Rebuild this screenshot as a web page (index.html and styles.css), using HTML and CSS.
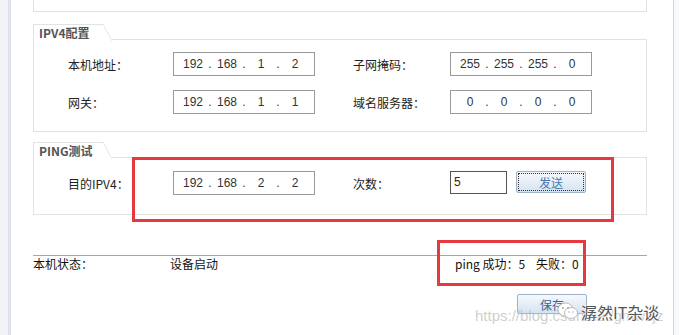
FILE: index.html
```html
<!DOCTYPE html>
<html lang="zh-CN">
<head>
    <meta charset="UTF-8">
    <title>IPV4配置</title>
    <link rel="stylesheet" href="styles.css">
</head>
<body>
<div class="window">
    <div class="side"></div>
    <div class="main">
        <div class="top-box"></div>

        <div class="group ipv4">
            <div class="group-head"><div class="tab">IPV4配置</div><div class="head-line"></div></div>
            <div class="group-body">
                <div class="row">
                    <span class="label">本机地址：</span>
                    <div class="ip"><span>192</span><i>.</i><span>168</span><i>.</i><span>1</span><i>.</i><span>2</span></div>
                    <span class="label">子网掩码：</span>
                    <div class="ip"><span>255</span><i>.</i><span>255</span><i>.</i><span>255</span><i>.</i><span>0</span></div>
                </div>
                <div class="row">
                    <span class="label">网关：</span>
                    <div class="ip"><span>192</span><i>.</i><span>168</span><i>.</i><span>1</span><i>.</i><span>1</span></div>
                    <span class="label">域名服务器：</span>
                    <div class="ip"><span>0</span><i>.</i><span>0</span><i>.</i><span>0</span><i>.</i><span>0</span></div>
                </div>
            </div>
        </div>

        <div class="group ping">
            <div class="group-head"><div class="tab">PING测试</div><div class="head-line"></div></div>
            <div class="group-body">
                <div class="row">
                    <span class="label">目的IPV4：</span>
                    <div class="ip"><span>192</span><i>.</i><span>168</span><i>.</i><span>2</span><i>.</i><span>2</span></div>
                    <span class="label">次数：</span>
                    <div class="count">5</div>
                    <button class="btn focus">发送</button>
                </div>
            </div>
        </div>

        <div class="status">
            <span class="status-label">本机状态：</span>
            <span class="status-value">设备启动</span>
            <span class="status-ping">ping 成功：5&nbsp;&nbsp;&nbsp;&nbsp;失败：0</span>
        </div>

        <div class="footer">
            <button class="btn">保存</button>
        </div>

        <!-- 标注框 -->
        <div class="mark mark-ping"></div>
        <div class="mark mark-count"></div>

        <div class="watermark">
            <span class="wm-url">https://blog.csdn.net/gmwzjz</span>
            <svg class="wm-icon" width="22" height="18" viewBox="0 0 22 18">
                <ellipse cx="8.5" cy="7.5" rx="7.5" ry="6.5" fill="#fff" stroke="#bbb" stroke-width="1"/>
                <ellipse cx="14" cy="11" rx="6.5" ry="5.5" fill="#fff" stroke="#bbb" stroke-width="1"/>
                <circle cx="6" cy="6" r="1" fill="#aaa"/>
                <circle cx="11" cy="6" r="1" fill="#aaa"/>
                <circle cx="12" cy="10" r="0.8" fill="#aaa"/>
                <circle cx="16" cy="10" r="0.8" fill="#aaa"/>
            </svg>
            <span class="wm-name">潺然IT杂谈</span>
        </div>
    </div>
    <div class="edge"></div>
</div>
</body>
</html>
```

FILE: styles.css
```css
body {
    margin: 0;
    background: #fff;
    font-family: "Noto Sans CJK SC", "Liberation Sans", sans-serif;
    font-size: 12px;
    color: #222;
}
.window {
    display: flex;
    height: 335px;
    overflow: hidden;
}
.side {
    width: 8px;
    background: #f2f3f8;
    border-right: 3px solid #dfe2ec;
}
.main {
    position: relative;
    width: 640px;
    padding-left: 22px;
}
.edge {
    flex: 1;
    border-left: 1px solid #d4d4d4;
    background: #f7f9fc;
}
.top-box {
    width: 612px;
    height: 11px;
    border: 1px solid #e2e2e2;
    border-top: none;
}

/* 分组框 */
.group {
    width: 614px;
    margin-top: 12px;
}
.ping {
    margin-top: 10px;
}
.group-head {
    display: flex;
    height: 16px;
}
.tab {
    position: relative;
    width: 64px;
    padding-left: 5px;
    border-top: 1px solid #e2e2e2;
    border-left: 1px solid #e2e2e2;
    font-weight: bold;
    color: #555;
    font-size: 12px;
    line-height: 16px;
    white-space: nowrap;
}
.tab::after {
    content: '';
    position: absolute;
    right: -9px;
    top: -1px;
    width: 9px;
    height: 17px;
    background: linear-gradient(to top right, transparent calc(50% - 0.6px), #dcdcdc, transparent calc(50% + 0.6px));
}
.head-line {
    flex: 1;
    margin-left: 9px;
    border-bottom: 1px solid #e2e2e2;
}
.group-body {
    border: 1px solid #e2e2e2;
    border-top: none;
    padding: 12px 0 17px 34px;
    display: flex;
    flex-direction: column;
    gap: 14px;
}
.ping .group-body {
    padding-top: 13px;
    padding-bottom: 19px;
}
.row {
    display: flex;
    align-items: center;
    height: 24px;
}
.label {
    width: 105px;
}
.label:nth-of-type(2) {
    width: 97px;
    margin-left: 38px;
}
.ip {
    height: 22px;
    width: 134px;
    border: 1px solid #999;
    display: flex;
    align-items: center;
    padding-left: 6px;
    font-family: "Liberation Sans", sans-serif;
    font-size: 12px;
    color: #333;
}
.ip span {
    width: 26px;
    text-align: center;
}
.ip i {
    font-style: normal;
    width: 8px;
    text-align: center;
}
.count {
    width: 52px;
    height: 21px;
    border: 1px solid #555;
    padding-left: 3px;
    font-family: "Liberation Sans", sans-serif;
    line-height: 20px;
    color: #3a2020;
    margin-top: -1px;
}

/* 按钮 */
.btn {
    width: 70px;
    height: 22px;
    margin-left: 9px;
    margin-top: -2px;
    border: 1px solid #9fb3c8;
    border-radius: 2px;
    background: linear-gradient(#f6f9fc, #e4edf6 55%, #d4e3f1);
    font-family: "Noto Sans CJK SC", sans-serif;
    font-size: 12px;
    color: #4a78ad;
    padding: 0;
}
.btn.focus {
    outline: 1px dotted #333;
    outline-offset: -3px;
}

/* 状态栏 */
.status {
    width: 614px;
    margin-top: 40px;
    border-top: 1px solid #a6a6a6;
    display: flex;
    line-height: 16px;
    color: #111;
}
.status-label {
    width: 137px;
}
.status-value {
    width: 285px;
}
.footer {
    width: 554px;
    padding-top: 22px;
    display: flex;
    justify-content: flex-end;
}
.footer .btn {
    height: 20px;
    margin: 0;
    color: #3e6494;
}

/* 红色标注 */
.mark {
    position: absolute;
    border: 3px solid #e5393e;
    box-sizing: border-box;
}
.mark-ping {
    left: 121px;
    top: 157px;
    width: 482px;
    height: 65px;
}
.mark-count {
    left: 426px;
    top: 240px;
    width: 149px;
    height: 46px;
}

/* 水印 */
.watermark {
    position: absolute;
    left: 454px;
    top: 300px;
    width: 208px;
    height: 35px;
}
.wm-url {
    position: absolute;
    left: 10px;
    top: 7px;
    font-family: "Liberation Sans", sans-serif;
    font-size: 15px;
    color: rgba(190, 190, 190, 0.75);
    white-space: nowrap;
}
.wm-icon {
    position: absolute;
    left: 92px;
    top: 2px;
}
.wm-name {
    position: absolute;
    left: 116px;
    top: 0;
    font-size: 16px;
    color: #555;
    white-space: nowrap;
    text-shadow: 0 0 2px #fff, 0 0 2px #fff;
}
```
